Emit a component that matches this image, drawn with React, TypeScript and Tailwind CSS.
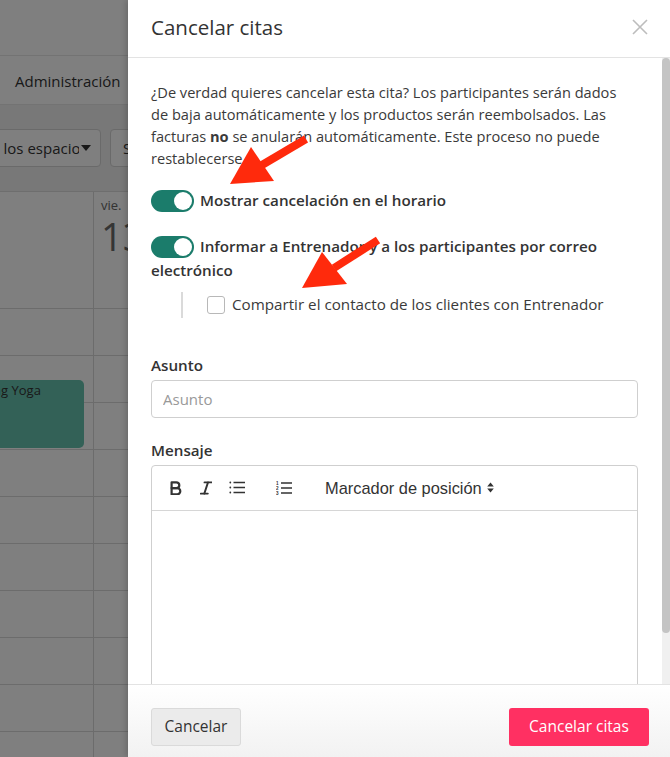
import React from "react";

const font = { fontFamily: '"Open Sans", "Noto Sans", sans-serif' };

function Toggle() {
  return (
    <span className="inline-flex w-[43px] h-[22px] rounded-full bg-[#1b7c6b] items-center justify-end p-[2px] mr-[6px] align-middle relative -top-[1px]">
      <span className="block w-[18px] h-[18px] rounded-full bg-white" />
    </span>
  );
}

function BoldIcon() {
  return (
    <svg width="12" height="14" viewBox="0 0 12 14" fill="none" stroke="#333" strokeWidth="2.2" strokeLinejoin="round">
      <path d="M1.6 1.3h4.8a2.9 2.9 0 0 1 0 5.8H1.6z" />
      <path d="M1.6 7.1h5.6a3.1 3.1 0 0 1 0 6.2H1.6z" />
    </svg>
  );
}

function ItalicIcon() {
  return (
    <svg width="12" height="14" viewBox="0 0 12 14" fill="none" stroke="#333" strokeWidth="1.9" strokeLinecap="round">
      <path d="M4.5 1.4h7" />
      <path d="M0.8 12.6h7" />
      <path d="M8 1.4 4.3 12.6" />
    </svg>
  );
}

function ListIcon() {
  return (
    <svg width="16" height="13" viewBox="0 0 16 13" fill="none" stroke="#333" strokeWidth="1.6">
      <circle cx="1.3" cy="1.5" r="0.9" fill="#333" stroke="none" />
      <circle cx="1.3" cy="6.5" r="0.9" fill="#333" stroke="none" />
      <circle cx="1.3" cy="11.5" r="0.9" fill="#333" stroke="none" />
      <path d="M4.5 1.5H16M4.5 6.5H16M4.5 11.5H16" />
    </svg>
  );
}

function OrderedIcon() {
  return (
    <svg width="16" height="14" viewBox="0 0 16 14" fill="none" stroke="#333" strokeWidth="1.6">
      <text x="0" y="3.6" fontSize="4.6" fill="#333" stroke="none" fontFamily="Liberation Sans, sans-serif" fontWeight="700">1</text>
      <text x="0" y="8.6" fontSize="4.6" fill="#333" stroke="none" fontFamily="Liberation Sans, sans-serif" fontWeight="700">2</text>
      <text x="0" y="13.6" fontSize="4.6" fill="#333" stroke="none" fontFamily="Liberation Sans, sans-serif" fontWeight="700">3</text>
      <path d="M5 2H16M5 7H16M5 12H16" />
    </svg>
  );
}

function SortCaret() {
  return (
    <svg width="7" height="11" viewBox="0 0 7 11" fill="#333">
      <path d="M3.5 0.5 6.8 4.5H0.2z" />
      <path d="M3.5 10.5 6.8 6.5H0.2z" />
    </svg>
  );
}

function Arrows() {
  return (
    <svg className="absolute inset-0 pointer-events-none" width="670" height="757" viewBox="0 0 670 757">
      <g fill="#ff2a0c" stroke="#ff2a0c">
        <line x1="306" y1="139" x2="262" y2="165" strokeWidth="8" />
        <polygon points="230,184 251,147 274,181" stroke="none" />
        <line x1="378" y1="240" x2="334" y2="268" strokeWidth="8" />
        <polygon points="302,288 322,252 347,284" stroke="none" />
      </g>
    </svg>
  );
}

function CalendarBackdrop() {
  const rows = Array.from({ length: 10 });
  return (
    <div className="w-[670px] h-[757px] bg-white overflow-hidden" style={font}>
      <div className="h-[56px] border-b border-[#e6e6e6]" />
      <div className="h-[49px] flex items-center pt-[3px] pl-[15px] border-b border-[#e6e6e6] text-[15px] font-medium text-[#333]">
        Administración
      </div>
      <div className="h-[87px] bg-[#f0f0f0] flex items-center gap-[9px] border-b border-[#dcdcdc]">
        <div className="-ml-[56px] w-[157px] h-[38px] bg-white border border-[#d4d4d4] rounded-[4px] flex items-center pl-[12px] text-[15px] text-[#333]">
          <span className="w-[122px] overflow-hidden whitespace-nowrap">Todos los espacios</span>
          <svg width="10" height="6" viewBox="0 0 10 6" className="ml-[2px]">
            <path d="M0 0h10L5 6z" fill="#333" />
          </svg>
        </div>
        <div className="w-[160px] h-[38px] bg-white border border-[#d4d4d4] rounded-[4px] flex items-center pl-[12px] text-[15px] text-[#333]">
          Seleccionar
        </div>
      </div>
      <div className="flex">
        <div className="w-[94px] border-r border-[#d8d8d8] relative">
          <div className="h-[117px] border-b border-[#d8d8d8]" />
          {rows.map((_, i) => (
            <div key={i} className="h-[47px] border-b border-[#d8d8d8]" />
          ))}
          <div className="absolute top-[188px] left-0 w-[84px] h-[68px] bg-[#67c2ae] rounded-r-[5px] overflow-hidden">
            <div className="-ml-[43px] mt-[1px] whitespace-nowrap text-[13px] text-[#333]">Morning Yoga</div>
          </div>
        </div>
        <div className="flex-1">
          <div className="h-[117px] border-b border-[#d8d8d8] pl-[7px] pt-[4px] text-[#666]">
            <div className="text-[13px] leading-[18px]">vie.</div>
            <div className="text-[38px] leading-[44px] text-[#6a6a6a]">13</div>
          </div>
          {rows.map((_, i) => (
            <div key={i} className="h-[47px] border-b border-[#d8d8d8]" />
          ))}
        </div>
      </div>
    </div>
  );
}

export default function App() {
  return (
    <div className="relative w-[670px] h-[757px] overflow-hidden" style={font}>
      <CalendarBackdrop />
      <div className="absolute inset-0 bg-black/50" />

      <div className="absolute top-0 right-0 w-[542px] h-[757px] bg-white flex flex-col shadow-[-2px_0_6px_rgba(0,0,0,0.18)] text-[#333]">
        <div className="h-[58px] shrink-0 border-b border-[#e3e3e3] flex items-center justify-between pl-[23px] pr-[23px]">
          <h2 className="text-[20.5px] leading-[28px] text-[#333] -mt-[3px]">Cancelar citas</h2>
          <svg width="16" height="16" viewBox="0 0 16 16" stroke="#bdbdbd" strokeWidth="1.6" className="-mt-[4px] -mr-[1px]">
            <path d="M1 1l14 14M15 1L1 15" />
          </svg>
        </div>

        <div className="flex-1 min-h-0 flex overflow-hidden">
          <div className="flex-1 pl-[23px] pr-[24px] pt-[23px] text-[15.2px]">
            <p className="leading-[22px] text-[14.6px] text-[#3a3a3a] pr-[14px]">
              ¿De verdad quieres cancelar esta cita? Los participantes serán dados de baja automáticamente y los
              productos serán reembolsados. Las facturas <b className="font-bold">no</b> se anularán automáticamente.
              Este proceso no puede restablecerse.
            </p>

            <div className="mt-[20px] leading-[23px] font-semibold text-[#333]">
              <Toggle />
              Mostrar cancelación en el horario
            </div>

            <div className="mt-[22px] leading-[23px] font-semibold text-[#333]">
              <Toggle />
              Informar a Entrenador y a los participantes por correo electrónico
            </div>

            <div className="mt-[10px] ml-[30px] h-[26px] flex items-center border-l-2 border-[#dadada] pl-[24px]">
              <span className="w-[18px] h-[18px] border-[1.5px] border-[#b8b8b8] rounded-[3px] bg-white" />
              <span className="ml-[7px] text-[#3a3a3a]">Compartir el contacto de los clientes con Entrenador</span>
            </div>

            <div className="mt-[36px] leading-[22px] font-semibold">Asunto</div>
            <input
              className="mt-[4px] block w-full h-[38px] border border-[#cfcfcf] rounded-[4px] px-[11px] text-[15px] placeholder:text-[#999] outline-none"
              placeholder="Asunto"
            />

            <div className="mt-[21px] leading-[22px] font-semibold">Mensaje</div>
            <div className="mt-[4px] border border-[#cfcfcf] rounded-t-[4px] h-[300px]">
              <div
                className="h-[45px] border-b border-[#d6d6d6] flex items-center pl-[18px]"
                style={{ fontFamily: '"Liberation Sans", Arial, sans-serif' }}
              >
                <BoldIcon />
                <span className="ml-[18px]"><ItalicIcon /></span>
                <span className="ml-[17px]"><ListIcon /></span>
                <span className="ml-[31px]"><OrderedIcon /></span>
                <span className="ml-[33px] text-[16.4px] text-[#333]">Marcador de posición</span>
                <span className="ml-[5px] flex"><SortCaret /></span>
              </div>
            </div>
          </div>

          <div className="w-[8px] shrink-0 flex flex-col bg-[#f0f0f0]">
            <div className="h-[575px] bg-[#c4c4c4] rounded-[4px]" />
          </div>
        </div>

        <div className="h-[73px] shrink-0 border-t border-[#e3e3e3] bg-gradient-to-b from-white to-[#f2f2f2] flex justify-between items-start pt-[23px] pl-[23px] pr-[21px] text-[15.5px]">
          <button className="w-[90px] h-[38px] bg-[#ebebeb] border border-[#dadada] rounded-[3px] text-[#333]">
            Cancelar
          </button>
          <button className="w-[140px] h-[38px] bg-[#ff3062] rounded-[3px] text-white">Cancelar citas</button>
        </div>
      </div>

      <Arrows />
    </div>
  );
}
